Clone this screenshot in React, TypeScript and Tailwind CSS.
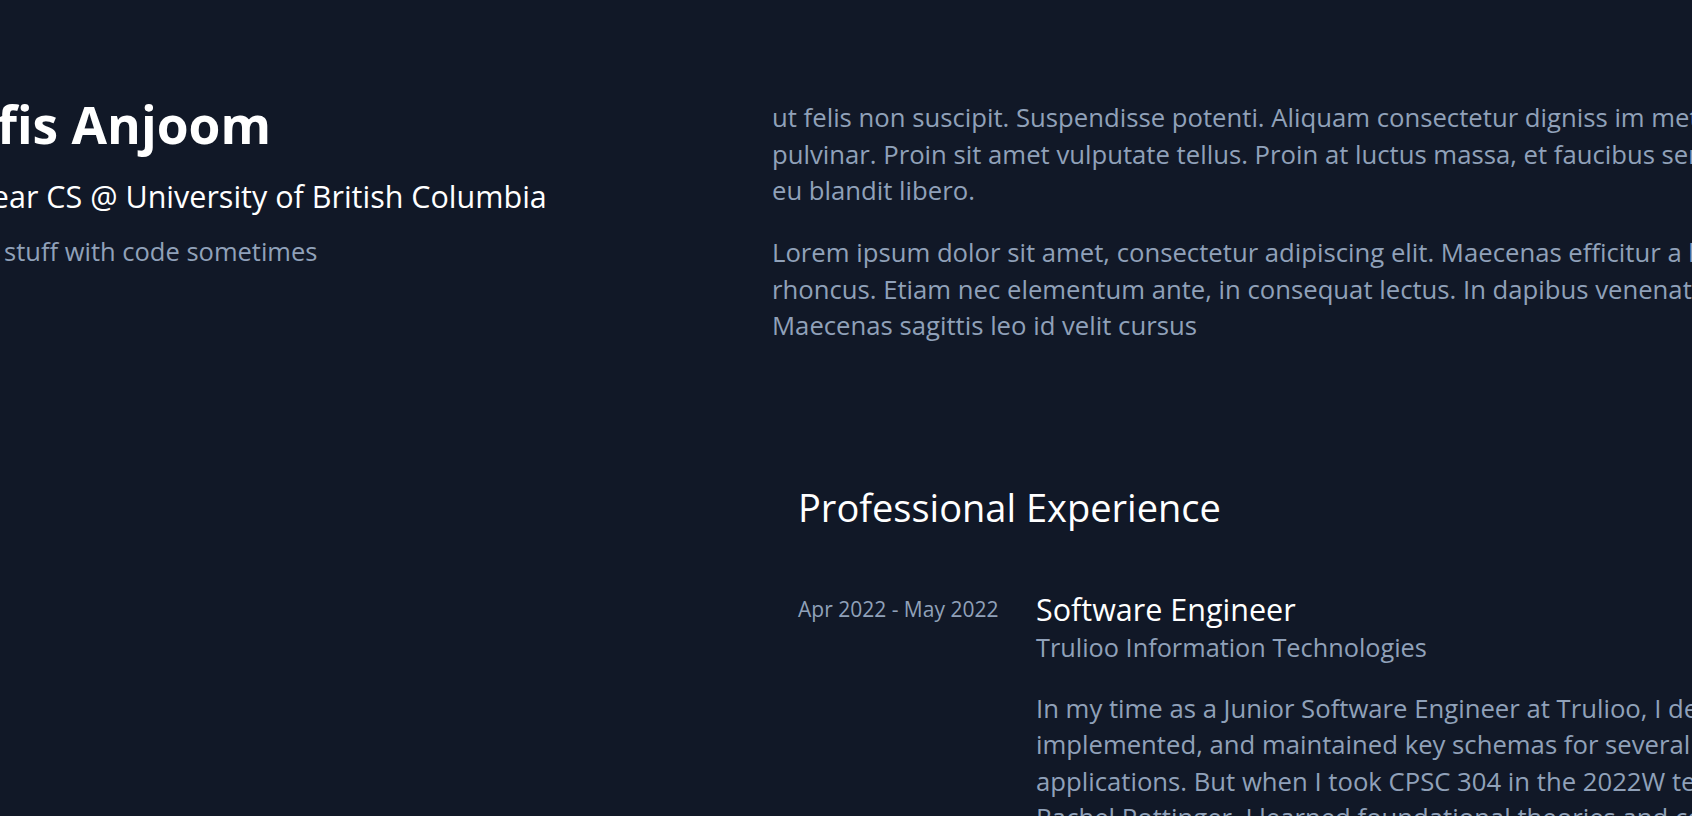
const intro: string[][] = [
  [
    'ut felis non suscipit. Suspendisse potenti. Aliquam consectetur digniss im metus, a',
    'pulvinar. Proin sit amet vulputate tellus. Proin at luctus massa, et faucibus semper',
    'eu blandit libero.',
  ],
  [
    'Lorem ipsum dolor sit amet, consectetur adipiscing elit. Maecenas efficitur a lacus vel',
    'rhoncus. Etiam nec elementum ante, in consequat lectus. In dapibus venenatis nibh.',
    'Maecenas sagittis leo id velit cursus',
  ],
]

type Job = {
  dates: string
  title: string
  company: string
  lines: string[]
}

const jobs: Job[] = [
  {
    dates: 'Apr 2022 - May 2022',
    title: 'Software Engineer',
    company: 'Trulioo Information Technologies',
    lines: [
      'In my time as a Junior Software Engineer at Trulioo, I designed,',
      'implemented, and maintained key schemas for several',
      'applications. But when I took CPSC 304 in the 2022W term with',
      'Rachel Pottinger, I learned foundational theories and concepts',
    ],
  },
]

const Header = () => (
  <header className="w-[848px] shrink-0 pt-[92px]">
    <h1 className="whitespace-nowrap text-[51.5px] leading-[64px] font-bold text-white">Nafis Anjoom</h1>
    <h2 className="mt-[20px] whitespace-nowrap text-[30.5px] leading-[40px] text-white">
      1st Year CS @ University of British Columbia
    </h2>
    <p className="mt-[17px] whitespace-nowrap text-[25.5px] leading-[36px] text-slate-400">
      I build stuff with code sometimes
    </p>
  </header>
)

const Experience = () => (
  <section className="mt-[138px] pl-[26px]">
    <h2 className="text-[38px] leading-[48px] text-white">Professional Experience</h2>
    {jobs.map((job) => (
      <div key={job.title} className="mt-[58px] flex">
        <p className="w-[238px] shrink-0 pt-[6px] text-[21px] leading-[28px] text-slate-400">{job.dates}</p>
        <div>
          <h3 className="text-[30.5px] leading-[40px] text-white">{job.title}</h3>
          <p className="text-[25.3px] leading-[36px] text-slate-400">{job.company}</p>
          <p className="mt-[26px] text-[25.7px] leading-[36.5px] text-slate-400">
            {job.lines.map((line) => (
              <span key={line} className="block whitespace-nowrap">
                {line}
              </span>
            ))}
          </p>
        </div>
      </div>
    ))}
  </section>
)

export default function App() {
  return (
    <div className="h-[816px] w-full overflow-hidden bg-[#111827] font-['Open_Sans',sans-serif]">
      <div className="ml-[-76px] flex">
        <Header />
        <main className="w-[1100px] shrink-0 pt-[100px]">
          {intro.map((para, i) => (
            <p
              key={i}
              className={`text-[25.7px] leading-[36.5px] text-slate-400 ${i > 0 ? 'mt-[25.5px]' : ''}`}
            >
              {para.map((line) => (
                <span key={line} className="block whitespace-nowrap">
                  {line}
                </span>
              ))}
            </p>
          ))}
          <Experience />
        </main>
      </div>
    </div>
  )
}
